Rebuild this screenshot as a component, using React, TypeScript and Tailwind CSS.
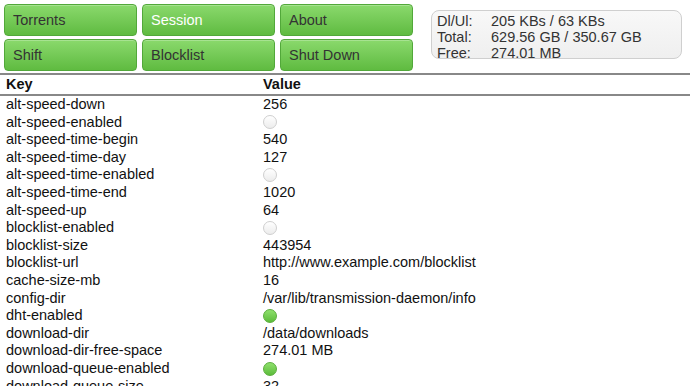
const buttons = [
  { label: "Torrents", active: false },
  { label: "Session", active: true },
  { label: "About", active: false },
  { label: "Shift", active: false },
  { label: "Blocklist", active: false },
  { label: "Shut Down", active: false },
];

type Val = string | boolean;

const rows: [string, Val][] = [
  ["alt-speed-down", "256"],
  ["alt-speed-enabled", false],
  ["alt-speed-time-begin", "540"],
  ["alt-speed-time-day", "127"],
  ["alt-speed-time-enabled", false],
  ["alt-speed-time-end", "1020"],
  ["alt-speed-up", "64"],
  ["blocklist-enabled", false],
  ["blocklist-size", "443954"],
  ["blocklist-url", "http://www.example.com/blocklist"],
  ["cache-size-mb", "16"],
  ["config-dir", "/var/lib/transmission-daemon/info"],
  ["dht-enabled", true],
  ["download-dir", "/data/downloads"],
  ["download-dir-free-space", "274.01 MB"],
  ["download-queue-enabled", true],
  ["download-queue-size", "32"],
  ["encryption", "preferred"],
];

const Dot = ({ on }: { on: boolean }) => (
  <span
    className={
      "inline-block w-[14px] h-[14px] rounded-full border align-middle " +
      (on
        ? "bg-gradient-to-b from-[#8ee06c] to-[#5cbc3a] border-[#5aad3c]"
        : "bg-gradient-to-b from-[#ffffff] to-[#ececec] border-[#cfcfcf]")
    }
  />
);

export default function App() {
  return (
    <div className="w-[692px] h-[386px] overflow-hidden bg-white text-[14.5px] text-[#111] font-['Liberation_Sans',Arial,sans-serif]">
      <div className="flex items-start pt-[4px] pl-[4px] h-[73px]">
        <div className="grid grid-cols-[133px_133px_133px] gap-x-[5px] gap-y-[3px]">
          {buttons.map((b) => (
            <div
              key={b.label}
              className={
                "h-[32px] flex items-center pl-[8px] pt-[2px] rounded-[4px] border border-[#52a83a] bg-gradient-to-b from-[#8ad96c] to-[#5fbb40] shadow-[inset_0_1px_0_rgba(255,255,255,0.25)] " +
                (b.active ? "text-white" : "text-[#333]")
              }
            >
              {b.label}
            </div>
          ))}
        </div>
        <div className="ml-[18px] mt-[6px] w-[251px] h-[49px] rounded-[8px] border border-[#cfcfcf] bg-gradient-to-b from-[#f8f8f8] to-[#efefef] px-[5px] pt-[2px] text-[#333] leading-[16px]">
          <div className="grid grid-cols-[54px_1fr]">
            <span>Dl/Ul:</span>
            <span>205 KBs / 63 KBs</span>
            <span>Total:</span>
            <span>629.56 GB / 350.67 GB</span>
            <span>Free:</span>
            <span>274.01 MB</span>
          </div>
        </div>
      </div>
      <div className="w-[690px] h-[2px] bg-[#888]" />
      <div className="w-[690px]">
        <div className="grid grid-cols-[257px_1fr] h-[21px] leading-[19px] font-bold border-b-2 border-[#888] px-[6px]">
          <span>Key</span>
          <span>Value</span>
        </div>
        {rows.map(([k, v]) => (
          <div key={k} className="grid grid-cols-[257px_1fr] h-[17.6px] leading-[17.6px] px-[6px]">
            <span>{k}</span>
            <span className="flex items-center">
              {typeof v === "boolean" ? <Dot on={v} /> : v}
            </span>
          </div>
        ))}
      </div>
    </div>
  );
}
